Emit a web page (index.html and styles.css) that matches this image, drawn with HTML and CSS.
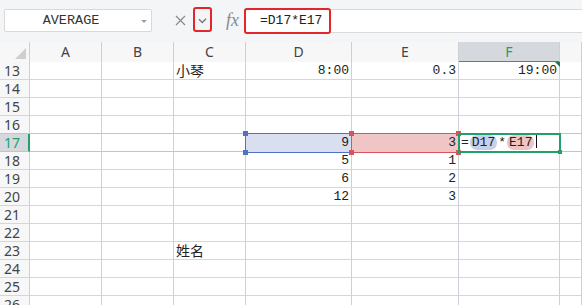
FILE: index.html
```html
<!DOCTYPE html>
<html>
<head>
<meta charset="utf-8">
<link rel="stylesheet" href="styles.css">
</head>
<body>
<div class="app">
  <div class="toolbar">
    <div class="namebox"><span>AVERAGE</span><i class="dd"></i></div>
    <svg class="xicon" width="11" height="11" viewBox="0 0 11 11"><path d="M1 1L10 10M10 1L1 10" stroke="#8a8a8a" stroke-width="1.2" fill="none"/></svg>
    <div class="okbox"><svg width="9" height="6" viewBox="0 0 9 6"><path d="M1 1.2L4.3 4.5L8 0.8" stroke="#7a7a7a" stroke-width="1.4" fill="none"/></svg></div>
    <div class="fx">fx</div>
    <div class="formula"><span class="fmark"></span><span class="ftext">=D17*E17</span></div>
  </div>
  <div class="sheet">
    <div class="row hdr">
      <div class="corner"><svg width="11" height="11" viewBox="0 0 11 11"><path d="M11 0V11H0Z" fill="#cfcfcf"/></svg></div>
      <div class="ch">A</div><div class="ch">B</div><div class="ch">C</div><div class="ch">D</div><div class="ch">E</div><div class="ch sel">F</div><div class="ch"></div>
    </div>
    <div class="row"><div class="rh">13</div><div class="c"></div><div class="c"></div><div class="c t">小琴</div><div class="c n">8:00</div><div class="c n">0.3</div><div class="c n">19:00<span class="tri"></span></div><div class="c"></div></div>
    <div class="row"><div class="rh">14</div><div class="c"></div><div class="c"></div><div class="c"></div><div class="c"></div><div class="c"></div><div class="c"></div><div class="c"></div></div>
    <div class="row"><div class="rh">15</div><div class="c"></div><div class="c"></div><div class="c"></div><div class="c"></div><div class="c"></div><div class="c"></div><div class="c"></div></div>
    <div class="row pre"><div class="rh">16</div><div class="c"></div><div class="c"></div><div class="c"></div><div class="c"></div><div class="c"></div><div class="c"></div><div class="c"></div></div>
    <div class="row cur"><div class="rh sel">17</div><div class="c"></div><div class="c"></div><div class="c"></div>
      <div class="c n"><span class="rng blue"><i class="h tl"></i><i class="h bl"></i></span><span class="v">9</span></div>
      <div class="c n"><span class="rng red"><i class="h tl"></i><i class="h bl"></i><i class="h tr"></i><i class="h br"></i></span><span class="v">3</span></div>
      <div class="c edit"><span class="rng green"><i class="h br"></i></span><span class="v etext">=<span class="pill pb">D17</span>*<span class="pill pr">E17</span><span class="caret"></span></span></div>
      <div class="c"></div></div>
    <div class="row"><div class="rh">18</div><div class="c"></div><div class="c"></div><div class="c"></div><div class="c n">5</div><div class="c n">1</div><div class="c"></div><div class="c"></div></div>
    <div class="row"><div class="rh">19</div><div class="c"></div><div class="c"></div><div class="c"></div><div class="c n">6</div><div class="c n">2</div><div class="c"></div><div class="c"></div></div>
    <div class="row"><div class="rh">20</div><div class="c"></div><div class="c"></div><div class="c"></div><div class="c n">12</div><div class="c n">3</div><div class="c"></div><div class="c"></div></div>
    <div class="row"><div class="rh">21</div><div class="c"></div><div class="c"></div><div class="c"></div><div class="c"></div><div class="c"></div><div class="c"></div><div class="c"></div></div>
    <div class="row"><div class="rh">22</div><div class="c"></div><div class="c"></div><div class="c"></div><div class="c"></div><div class="c"></div><div class="c"></div><div class="c"></div></div>
    <div class="row"><div class="rh">23</div><div class="c"></div><div class="c"></div><div class="c t">姓名</div><div class="c"></div><div class="c"></div><div class="c"></div><div class="c"></div></div>
    <div class="row"><div class="rh">24</div><div class="c"></div><div class="c"></div><div class="c"></div><div class="c"></div><div class="c"></div><div class="c"></div><div class="c"></div></div>
    <div class="row"><div class="rh">25</div><div class="c"></div><div class="c"></div><div class="c"></div><div class="c"></div><div class="c"></div><div class="c"></div><div class="c"></div></div>
    <div class="row"><div class="rh">26</div><div class="c"></div><div class="c"></div><div class="c"></div><div class="c"></div><div class="c"></div><div class="c"></div><div class="c"></div></div>
  </div>
</div>
</body>
</html>
```
FILE: styles.css
```css
html, body {
  margin: 0;
  padding: 0;
  background: #ffffff;
}
.app {
  width: 582px;
  height: 305px;
  overflow: hidden;
  font-family: "Noto Sans", "Noto Sans CJK SC", sans-serif;
  color: #333;
}
.toolbar {
  height: 42px;
  box-sizing: border-box;
  background: #f4f5f6;
  display: flex;
  align-items: flex-start;
  padding-top: 8px;
}
.namebox {
  position: relative;
  margin-top: 1px;
  margin-left: 4px;
  width: 148px;
  height: 23px;
  box-sizing: border-box;
  border: 1px solid #d9d9d9;
  border-radius: 2px;
  background: #fff;
  display: flex;
  align-items: center;
  justify-content: center;
  padding-right: 14px;
  font-family: "Liberation Mono", monospace;
  font-size: 13.5px;
  color: #333;
}
.dd {
  position: absolute;
  right: 4px;
  top: 10px;
  width: 0;
  height: 0;
  border-left: 3px solid transparent;
  border-right: 3px solid transparent;
  border-top: 3px solid #a0a0a0;
}
.xicon {
  margin-left: 23px;
  margin-top: 7px;
}
.okbox {
  margin-left: 7px;
  margin-top: -1px;
  width: 19px;
  height: 25px;
  box-sizing: border-box;
  border: 2px solid #e3262b;
  border-radius: 3px;
  display: flex;
  align-items: center;
  justify-content: center;
  padding-top: 3px;
}
.fx {
  margin-left: 14px;
  margin-top: 2px;
  width: 16px;
  font-family: "Liberation Serif", serif;
  font-style: italic;
  font-size: 18px;
  line-height: 20px;
  color: #8a8a8a;
}
.formula {
  position: relative;
  flex: 1;
  margin-left: 2px;
  margin-top: 1px;
  height: 24px;
  box-sizing: border-box;
  background: #fff;
  border-top: 1px solid #d9d9d9;
  border-bottom: 1px solid #d9d9d9;
  padding-left: 16px;
  font-family: "Liberation Mono", monospace;
  font-size: 13px;
  line-height: 22px;
  color: #222;
}
.fmark {
  position: absolute;
  left: 0;
  top: -2px;
  width: 87px;
  height: 26px;
  box-sizing: border-box;
  border: 2px solid #e3262b;
  border-radius: 3px;
}
.sheet {
  display: flex;
  flex-direction: column;
}
.row {
  display: grid;
  grid-template-columns: 30px 72px 72px 72px 106px 107px 101px 1fr;
  height: 18px;
}
.row.hdr {
  height: 20px;
  background: #f7f7f7;
}
.row > div {
  box-sizing: border-box;
  border-right: 1px solid #cdd0d8;
  border-bottom: 1px solid #d6d6d9;
  position: relative;
}
.corner {
  display: flex;
  align-items: flex-end;
  justify-content: flex-end;
  padding: 0 3px 3px 0;
}
.ch {
  text-align: center;
  font-size: 14px;
  line-height: 19px;
  color: #444;
}
.ch.sel {
  background: #d5d8dc;
  color: #21a06a;
  border-bottom: 2px solid #21a06a !important;
}
.rh {
  background: #f7f7f7;
  font-size: 14px;
  line-height: 17px;
  padding-left: 4px;
  color: #444;
}
.rh.sel {
  background: #d5d8dc;
  color: #21a06a;
  border-right: 2px solid #21a06a !important;
}
.row.cur > div,
.row.pre > div {
  border-bottom-color: #c2c4c9;
}
.c {
  background: #fff;
}
.t {
  font-family: "Noto Sans CJK SC", sans-serif;
  font-size: 14px;
  line-height: 17px;
  padding-left: 2px;
  color: #222;
}
.n {
  font-family: "Liberation Mono", monospace;
  font-size: 13px;
  line-height: 17px;
  text-align: right;
  padding-right: 2px;
  color: #222;
}
.v {
  position: relative;
  z-index: 2;
}
.tri {
  position: absolute;
  right: -1px;
  top: 0;
  width: 0;
  height: 0;
  border-top: 5px solid #1d7a45;
  border-left: 5px solid transparent;
  z-index: 3;
}
.rng {
  position: absolute;
  left: -1px;
  top: -1px;
  right: -1px;
  bottom: -2px;
  box-sizing: border-box;
  border: 1.5px solid;
  z-index: 1;
}
.rng.blue {
  background: #d9def1;
  border-color: #5170c6;
  right: -2px;
}
.rng.red {
  background: #f0c5c5;
  border-color: #d8545c;
}
.rng.green {
  border: 2px solid #21a06a;
  right: -2px;
  z-index: 2;
}
.h {
  position: absolute;
  width: 5px;
  height: 5px;
  z-index: 4;
}
.blue .h { background: #5170c6; }
.red .h { background: #d8545c; }
.green .h { background: #21a06a; width: 4px; height: 4px; }
.h.tl { left: -3px; top: -3px; }
.h.bl { left: -3px; bottom: -3px; }
.h.tr { right: -3px; top: -3px; }
.h.br { right: -3px; bottom: -3px; }
.edit {
  font-family: "Liberation Mono", monospace;
  font-size: 13px;
  line-height: 17px;
  padding-left: 2px;
  color: #222;
}
.etext {
  z-index: 3;
}
.pill {
  display: inline-block;
  padding: 0 2px;
  border-radius: 7px;
  line-height: 15px;
  margin: 0 1px;
}
.pb { background: #c6cfec; }
.pr { background: #eec4c4; }
.caret {
  display: inline-block;
  width: 1px;
  height: 13px;
  background: #111;
  vertical-align: -2px;
  margin-left: 1px;
}
```
